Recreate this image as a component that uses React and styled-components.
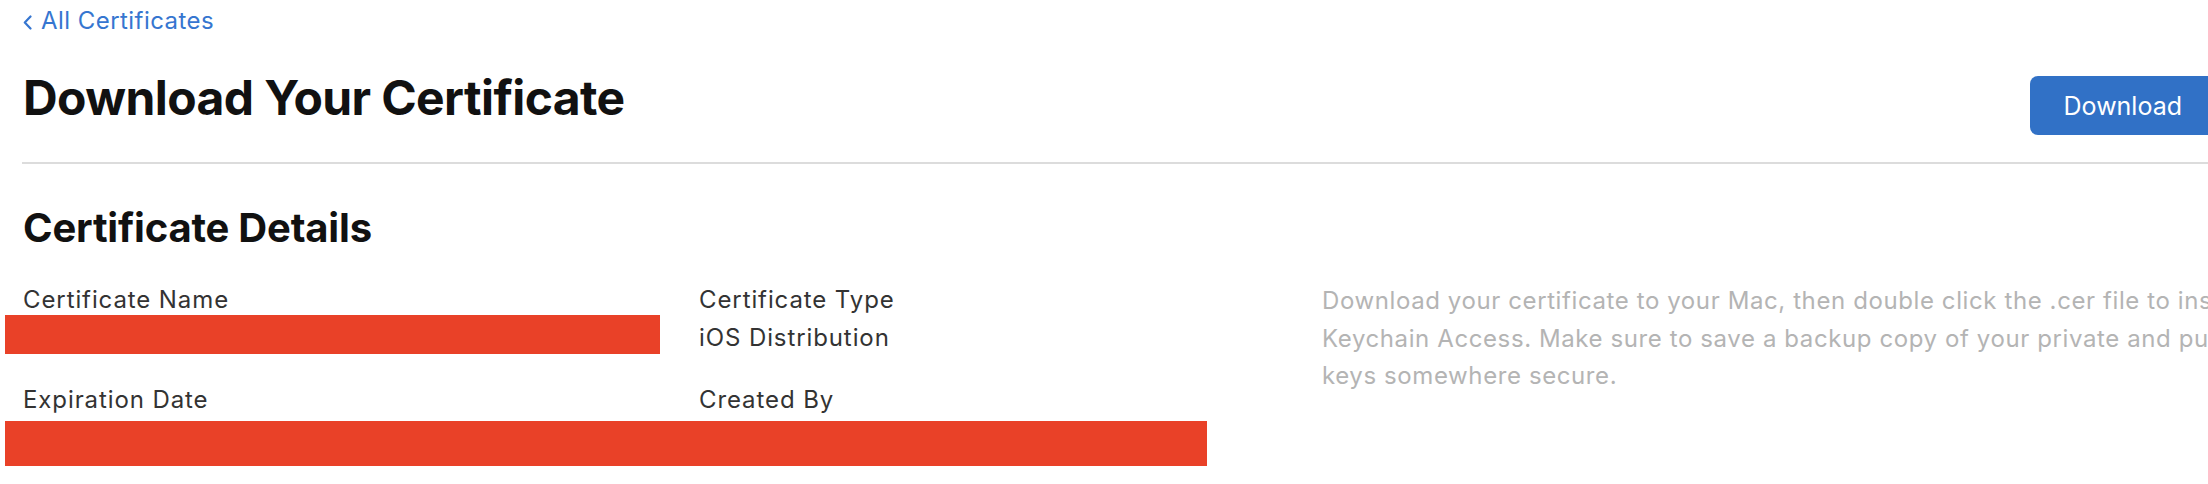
import React from 'react';
import styled, {createGlobalStyle} from 'styled-components';

const GlobalStyle = createGlobalStyle`
  html, body {
    margin: 0;
    padding: 0;
    overflow: hidden;
    background: #ffffff;
  }
  body {
    font-family: Inter, "Noto Sans", "Liberation Sans", sans-serif;
    -webkit-font-smoothing: antialiased;
  }
`

const details = [
    {label: 'Certificate Name', redacted: 655},
    {label: 'Certificate Type', value: 'iOS Distribution'},
];

const App = () => {
    return (
        <>
            <GlobalStyle/>
            <Page>
                <BackLink href="#">
                    <svg width="9" height="15" viewBox="0 0 9 15" fill="none">
                        <polyline points="7.5,1.5 1.8,7.5 7.5,13.5" stroke="currentColor" strokeWidth="2.2"
                                  strokeLinecap="round" strokeLinejoin="round"/>
                    </svg>
                    All Certificates
                </BackLink>
                <HeaderRow>
                    <Title>Download Your Certificate</Title>
                    <DownloadButton>Download</DownloadButton>
                </HeaderRow>
                <Divider/>
                <SectionTitle>Certificate Details</SectionTitle>
                <DetailsLayout>
                    <FieldsGrid>
                        {details.map(d => (
                            <Field key={d.label}>
                                <Label>{d.label}</Label>
                                {d.redacted
                                    ? <Redacted $width={d.redacted} $height={39}/>
                                    : <Value>{d.value}</Value>}
                            </Field>
                        ))}
                        <Field $spaced>
                            <Label>Expiration Date</Label>
                        </Field>
                        <Field $spaced>
                            <Label>Created By</Label>
                        </Field>
                        <Redacted $width={1202} $height={45} $span/>
                    </FieldsGrid>
                    <Description>
                        Download your certificate to your Mac, then double click the .cer file to install in<br/>
                        Keychain Access. Make sure to save a backup copy of your private and public<br/>
                        keys somewhere secure.
                    </Description>
                </DetailsLayout>
            </Page>
        </>
    );
};

export default App;

const Page = styled.div`
  width: 2193px;
  padding: 6px 23px 0;
`

const BackLink = styled.a`
  display: flex;
  align-items: center;
  gap: 9px;
  height: 30px;
  font-size: 24px;
  line-height: 30px;
  letter-spacing: 0.45px;
  color: #3676d0;
  text-decoration: none;
  svg {
    margin-top: 3px;
  }
`

const HeaderRow = styled.div`
  display: flex;
  justify-content: space-between;
  align-items: flex-start;
  margin-top: 34px;
`

const Title = styled.h1`
  margin: 0;
  font-size: 48px;
  line-height: 56px;
  font-weight: 700;
  color: #111111;
  letter-spacing: -0.6px;
`

const DownloadButton = styled.button`
  margin-top: 6px;
  height: 59px;
  padding: 0 34px;
  border: none;
  border-radius: 8px;
  background: #3171c6;
  color: #ffffff;
  font-family: inherit;
  font-size: 25px;
  font-weight: 400;
  cursor: pointer;
`

const Divider = styled.hr`
  margin: 27px 0 0 -1px;
  height: 2px;
  border: none;
  background: #dcdcdc;
`

const SectionTitle = styled.h2`
  margin: 40px 0 0;
  font-size: 40px;
  line-height: 48px;
  font-weight: 700;
  color: #111111;
  letter-spacing: -0.2px;
`

const DetailsLayout = styled.div`
  display: flex;
  align-items: flex-start;
  margin-top: 33px;
`

const FieldsGrid = styled.div`
  display: grid;
  grid-template-columns: 676px 623px;
  align-items: start;
`

const Field = styled.div`
  display: flex;
  flex-direction: column;
  margin-top: ${p => p.$spaced ? '31px' : '0'};
`

const Label = styled.div`
  font-size: 24px;
  line-height: 30px;
  letter-spacing: 0.9px;
  color: #333333;
`

const Value = styled(Label)`
  margin-top: 8px;
`

const Redacted = styled.div`
  grid-column: ${p => p.$span ? '1 / -1' : 'auto'};
  width: ${p => p.$width}px;
  height: ${p => p.$height}px;
  margin: ${p => p.$span ? '6px' : '0'} 0 0 -18px;
  background: #e94128;
`

const Description = styled.p`
  margin: -3px 0 0;
  font-size: 24px;
  line-height: 37.5px;
  letter-spacing: 0.6px;
  color: #b4b4b4;
  white-space: nowrap;
`
